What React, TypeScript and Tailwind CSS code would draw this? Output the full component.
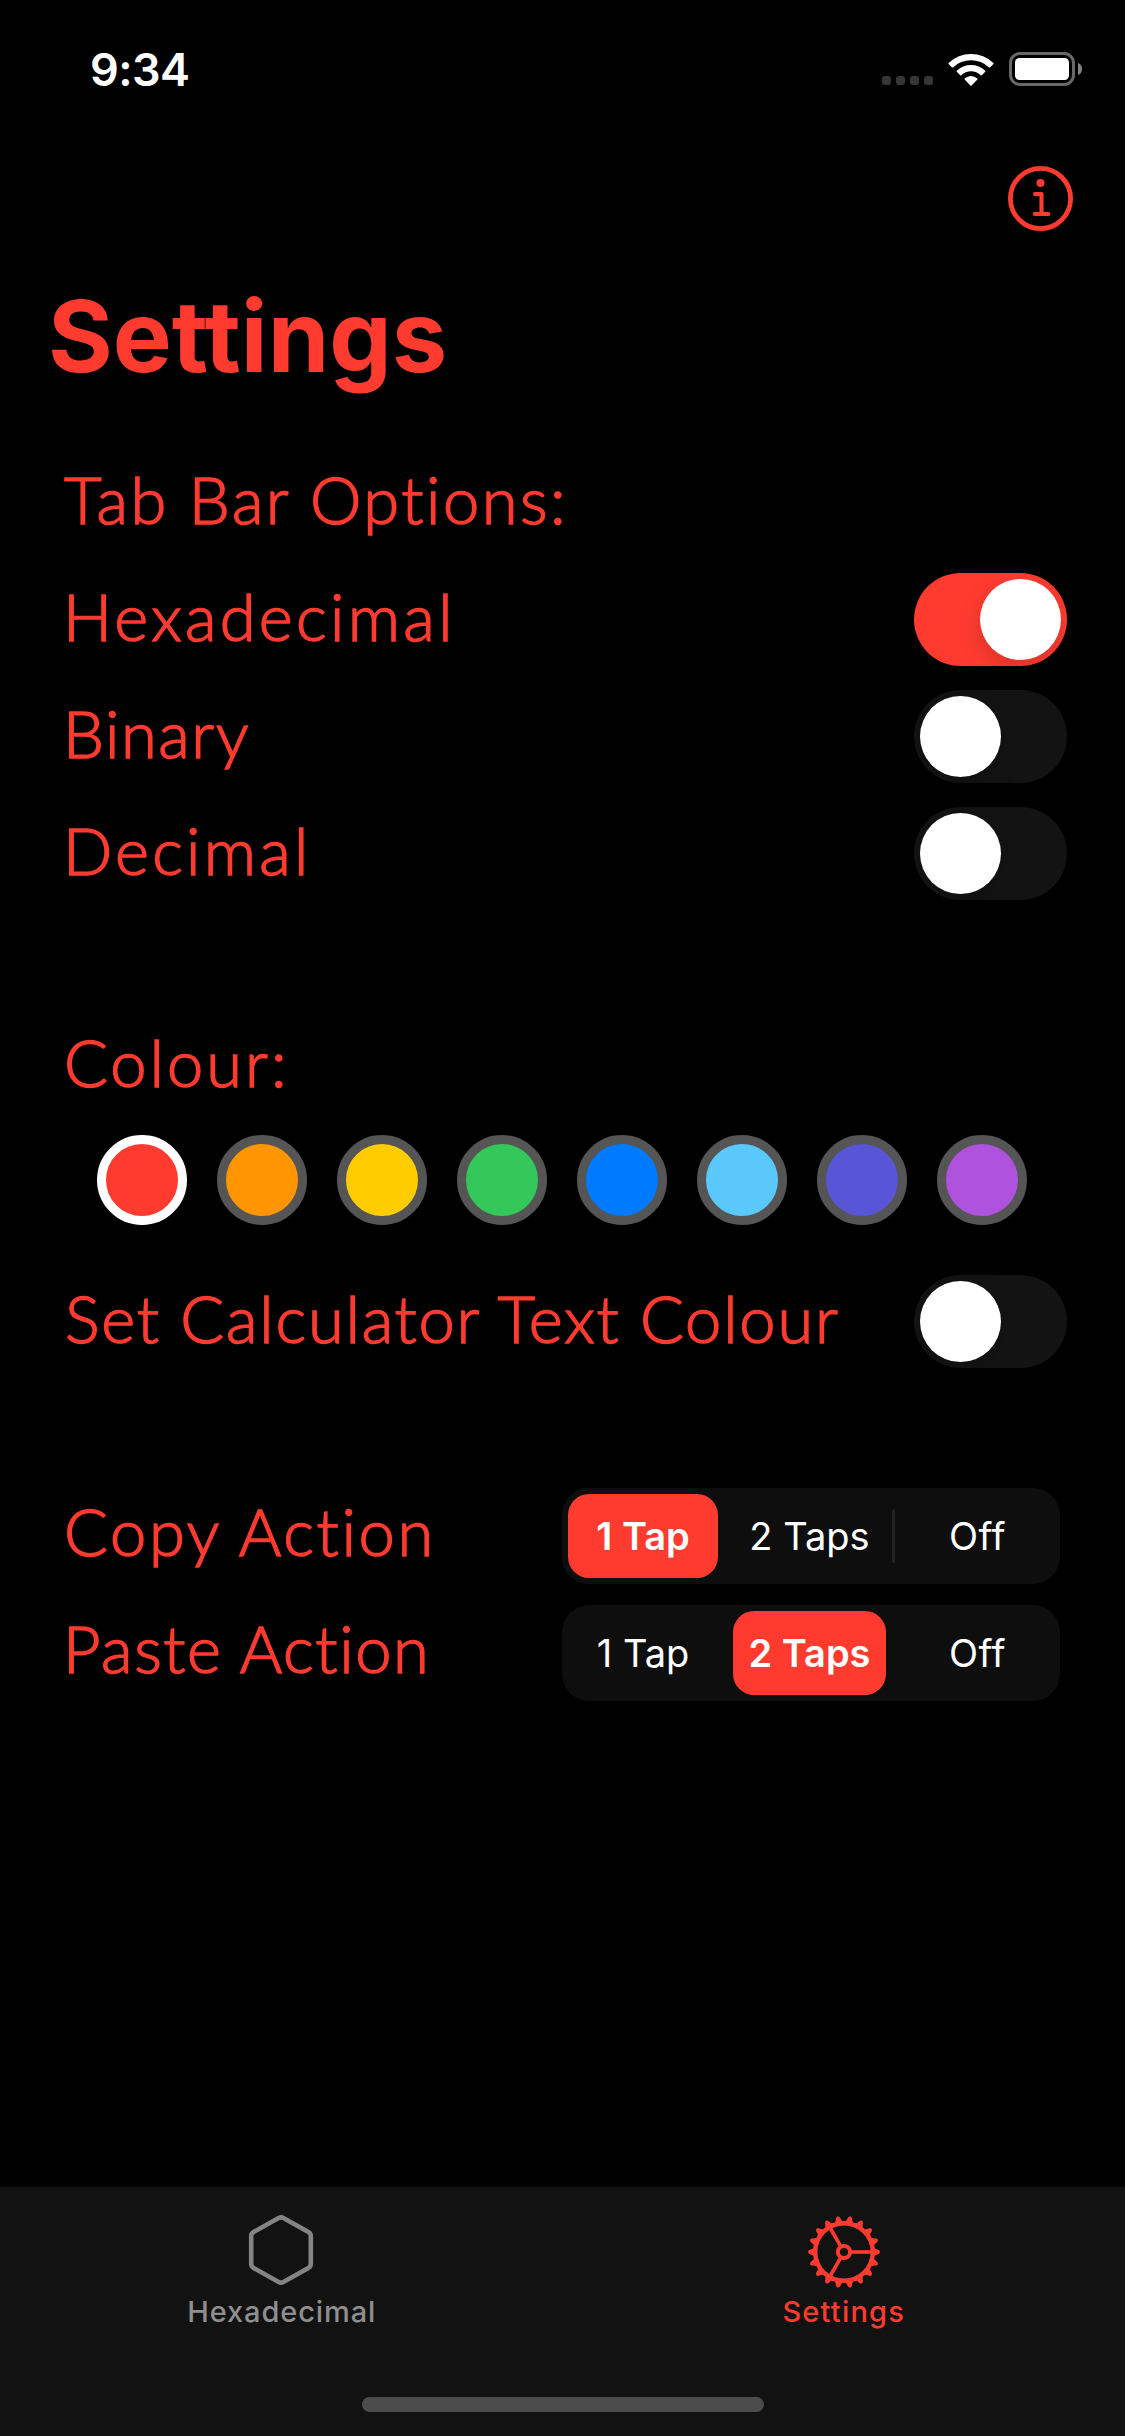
import { useState } from "react";

const COLOURS = [
  { name: "red", fill: "bg-[#ff3b30]" },
  { name: "orange", fill: "bg-[#ff9500]" },
  { name: "yellow", fill: "bg-[#ffcc00]" },
  { name: "green", fill: "bg-[#34c759]" },
  { name: "blue", fill: "bg-[#007aff]" },
  { name: "teal", fill: "bg-[#5ac8fa]" },
  { name: "indigo", fill: "bg-[#5856d6]" },
  { name: "purple", fill: "bg-[#af52de]" },
];

const TAPS = ["1 Tap", "2 Taps", "Off"];

function StatusBar() {
  return (
    <div className="flex h-[138px] shrink-0 items-center justify-between pl-[90px] pr-[43px] text-white">
      <span className="text-[45px] font-semibold leading-none tracking-[-0.6px]">9:34</span>
      <div className="flex items-center">
        <div className="mr-[15px] mt-[23px] flex gap-[5px]">
          {[0, 1, 2, 3].map((i) => (
            <span key={i} className="h-[9px] w-[9px] rounded-[3px] bg-[#363636]" />
          ))}
        </div>
        <svg className="mr-[15px] h-[33px] w-[46px]" viewBox="0 0 46 33" fill="currentColor">
          <path d="M0.6 10.1 A32 32 0 0 1 45.4 10.1 Q45.8 10.6 45.4 11.1 L42 14.4 Q41.5 14.8 41 14.4 A26 26 0 0 0 5 14.4 Q4.5 14.8 4 14.4 L0.6 11.1 Q0.2 10.6 0.6 10.1 Z" />
          <path d="M8.8 17.7 A20.6 20.6 0 0 1 37.2 17.7 Q37.7 18.3 37.2 18.8 L33.8 22.2 Q33.3 22.6 32.7 22.2 A14.2 14.2 0 0 0 13.3 22.2 Q12.7 22.6 12.2 22.2 L8.8 18.8 Q8.3 18.3 8.8 17.7 Z" />
          <path d="M16.6 25.6 A9.2 9.2 0 0 1 29.4 25.6 Q29.9 26.1 29.4 26.6 L23.6 32.4 Q23 32.9 22.4 32.4 L16.6 26.6 Q16.1 26.1 16.6 25.6 Z" />
        </svg>
        <svg className="h-[34px] w-[73px]" viewBox="0 0 73 34">
          <rect x="1.5" y="1.5" width="63" height="31" rx="9.5" fill="none" stroke="#686868" strokeWidth="3" />
          <rect x="6" y="6" width="54" height="22" rx="4.5" fill="#fff" />
          <path d="M69 11 C71.8 12 73 14.3 73 17 C73 19.7 71.8 22 69 23 Z" fill="#848484" />
        </svg>
      </div>
    </div>
  );
}

function InfoIcon() {
  return (
    <svg className="h-[65px] w-[65px]" viewBox="0 0 65 65" fill="none" stroke="currentColor">
      <circle cx="32.5" cy="32.5" r="30.1" strokeWidth="4.8" />
      <circle cx="32.5" cy="17" r="4" fill="currentColor" stroke="none" />
      <path d="M27 28 H33.5 V48 M26.8 48 H40.4" strokeWidth="4.1" strokeLinecap="round" strokeLinejoin="round" />
    </svg>
  );
}

function HexagonIcon() {
  return (
    <svg className="h-[70px] w-[66px]" viewBox="0 0 66 70" fill="none" stroke="currentColor" strokeWidth="4.6">
      <path d="M30.6 3 Q33 1.8 35.4 3 L60.4 17 Q62.8 18.4 62.8 21 V49 Q62.8 51.6 60.4 53 L35.4 67 Q33 68.2 30.6 67 L5.6 53 Q3.2 51.6 3.2 49 V21 Q3.2 18.4 5.6 17 Z" />
    </svg>
  );
}

function GearIcon() {
  return (
    <svg className="h-[72px] w-[72px]" viewBox="-36 -36 72 72" fill="none" stroke="currentColor">
      <circle r="28.8" strokeWidth="4.4" />
      <circle r="6.1" strokeWidth="4" />
      {[0, 120, 240].map((a) => (
        <path key={a} d="M7 0 H28" strokeWidth="3.6" transform={`rotate(${a})`} />
      ))}
      {Array.from({ length: 18 }, (_, i) => (
        <path
          key={i}
          d="M29.6 -4 L34.6 -1.9 Q36 -1.3 36 0 Q36 1.3 34.6 1.9 L29.6 4 Z"
          fill="currentColor"
          stroke="none"
          transform={`rotate(${i * 20})`}
        />
      ))}
    </svg>
  );
}

interface LabelProps {
  text: string;
  className: string;
}

function Label({ text, className }: LabelProps) {
  return (
    <span
      className={`whitespace-nowrap font-[Lato,sans-serif] text-[65px] font-light leading-[78px] [-webkit-text-stroke:1.5px_#ff3b30] ${className}`}
    >
      {text}
    </span>
  );
}

interface ToggleProps {
  on: boolean;
  onChange: () => void;
}

function Toggle({ on, onChange }: ToggleProps) {
  return (
    <button
      role="switch"
      aria-checked={on}
      onClick={onChange}
      className={`flex h-[93px] w-[153px] items-center rounded-full px-1.5 ${
        on ? "justify-end bg-[#ff3b30]" : "justify-start bg-[#131313]"
      }`}
    >
      <span className="h-[81px] w-[81px] rounded-full bg-white shadow-[0_9px_24px_rgba(0,0,0,0.15)]" />
    </button>
  );
}

interface SegmentedProps {
  value: number;
  onChange: (value: number) => void;
}

function Segmented({ value, onChange }: SegmentedProps) {
  return (
    <div className="flex h-24 w-[498px] items-center rounded-[27px] bg-[#0e0e0e] px-1.5 text-white">
      {TAPS.map((label, i) => (
        <div key={label} className="flex h-[84px] items-center">
          {i > 0 && (
            <span
              className={`mx-1.5 h-[54px] w-[3px] rounded-full ${
                value === i || value === i - 1 ? "bg-transparent" : "bg-[#232323]"
              }`}
            />
          )}
          <button
            onClick={() => onChange(i)}
            className={`h-[84px] text-[38px] leading-none ${i === 1 ? "w-[153px]" : "w-[150px]"} ${
              i === 2 ? "pl-[3px] tracking-[0.4px]" : ""
            } ${value === i ? "rounded-[21px] bg-[#ff3b30] font-semibold" : ""}`}
          >
            {label}
          </button>
        </div>
      ))}
    </div>
  );
}

export default function App() {
  const [tabs, setTabs] = useState({ hex: true, bin: false, dec: false });
  const [textColour, setTextColour] = useState(false);
  const [colour, setColour] = useState("red");
  const [copy, setCopy] = useState(0);
  const [paste, setPaste] = useState(1);

  return (
    <div className="flex h-[2436px] w-[1125px] flex-col overflow-hidden bg-black font-[Inter,sans-serif] text-[#ff3b30]">
      <StatusBar />

      <header className="shrink-0">
        <div className="flex h-[121px] items-center justify-end pr-[52px]">
          <InfoIcon />
        </div>
        <h1 className="flex h-[154px] items-center pl-12 text-[99px] font-bold leading-none">Settings</h1>
      </header>

      <main className="flex flex-col pl-[63px] pr-[58px]">
        <section className="flex flex-col gap-6 pt-[43px]">
          <div className="flex h-[93px] items-center">
            <Label text="Tab Bar Options:" className="pb-[7px] pl-px tracking-[2.5px]" />
          </div>
          <div className="flex h-[93px] items-center justify-between">
            <Label text="Hexadecimal" className="pb-[7px] tracking-[3.3px]" />
            <Toggle on={tabs.hex} onChange={() => setTabs({ ...tabs, hex: !tabs.hex })} />
          </div>
          <div className="flex h-[93px] items-center justify-between">
            <Label text="Binary" className="pb-[7px] tracking-[1.6px]" />
            <Toggle on={tabs.bin} onChange={() => setTabs({ ...tabs, bin: !tabs.bin })} />
          </div>
          <div className="flex h-[93px] items-center justify-between">
            <Label text="Decimal" className="pb-[7px] tracking-[3.2px]" />
            <Toggle on={tabs.dec} onChange={() => setTabs({ ...tabs, dec: !tabs.dec })} />
          </div>
        </section>

        <section className="flex flex-col pt-[119px]">
          <div className="flex h-[93px] items-center">
            <Label text="Colour:" className="pb-[7px] pl-px tracking-[3px]" />
          </div>
          <div className="flex gap-[30px] pl-[34px] pt-[23px]">
            {COLOURS.map((c) => (
              <button
                key={c.name}
                aria-label={c.name}
                onClick={() => setColour(c.name)}
                className={`h-[90px] w-[90px] rounded-full border-[9px] ${c.fill} ${
                  colour === c.name ? "border-white" : "border-[#555555]"
                }`}
              />
            ))}
          </div>
          <div className="mt-[50px] flex h-[93px] items-center justify-between">
            <Label text="Set Calculator Text Colour" className="pb-[7px] pl-0.5 tracking-[1.8px]" />
            <Toggle on={textColour} onChange={() => setTextColour(!textColour)} />
          </div>
        </section>

        <section className="flex flex-col gap-[21px] pr-[7px] pt-[120px]">
          <div className="flex h-24 items-center justify-between">
            <Label text="Copy Action" className="pb-[10px] pl-px tracking-[2.7px]" />
            <Segmented value={copy} onChange={setCopy} />
          </div>
          <div className="flex h-24 items-center justify-between">
            <Label text="Paste Action" className="pb-[10px] tracking-[1.6px]" />
            <Segmented value={paste} onChange={setPaste} />
          </div>
        </section>
      </main>

      <footer className="mt-auto flex h-[249px] shrink-0 flex-col items-center bg-[#121212]">
        <nav className="grid w-full grid-cols-2 text-[29px] font-medium leading-9">
          <button className="flex flex-col items-center pt-7 text-[#848484]">
            <HexagonIcon />
            <span className="mt-[9px] pl-px tracking-[0.9px] text-[#8e8e8e]">Hexadecimal</span>
          </button>
          <button className="flex flex-col items-center pt-[29px]">
            <GearIcon />
            <span className="mt-1.5 tracking-[1.2px]">Settings</span>
          </button>
        </nav>
        <div className="mb-6 mt-auto h-[15px] w-[402px] rounded-full bg-[#4c4c4c]" />
      </footer>
    </div>
  );
}
